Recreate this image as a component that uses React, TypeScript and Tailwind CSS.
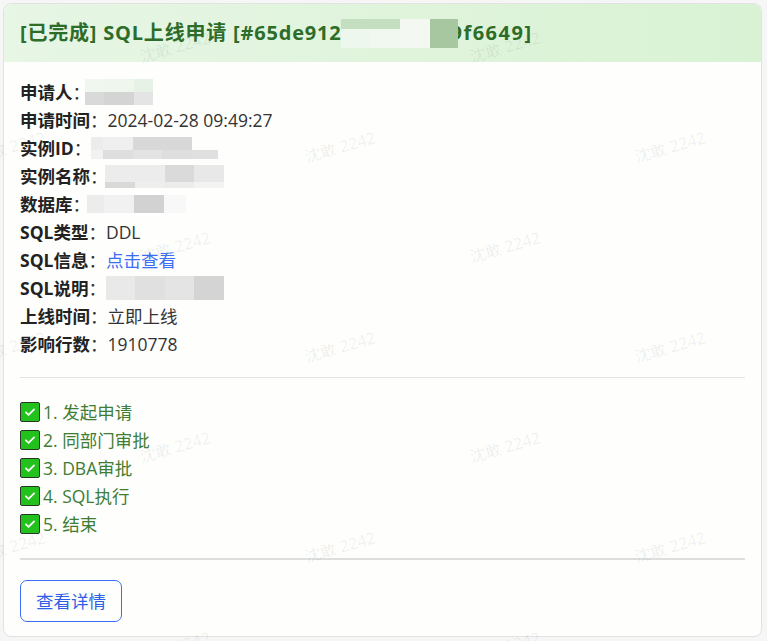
import React from 'react';

type Cell = { w: string; bg: string };

// pixelated blur blocks that hide private values
function Mosaic({ rows, className = '' }: { rows: { h: string; cells: Cell[] }[]; className?: string }) {
  return (
    <span className={`inline-flex flex-col align-middle ${className}`}>
      {rows.map((r, i) => (
        <span key={i} className={`flex ${r.h}`}>
          {r.cells.map((c, j) => (
            <span key={j} className={`${c.w} ${c.bg} h-full`} />
          ))}
        </span>
      ))}
    </span>
  );
}

const marks = [
  [175, 47], [505, 47],
  [10, 147], [340, 147], [670, 147],
  [175, 247], [505, 247],
  [10, 347], [340, 347], [670, 347],
  [175, 447], [505, 447],
  [10, 547], [340, 547], [670, 547],
  [175, 647], [505, 647],
];

function Watermarks() {
  return (
    <div className="pointer-events-none absolute inset-0 overflow-hidden">
      {marks.map(([x, y], i) => (
        <span
          key={i}
          className="absolute -translate-x-1/2 -translate-y-1/2 -rotate-[16deg] whitespace-nowrap text-[16px] text-black/[0.07]"
          style={{ left: x, top: y }}
        >
          沈敢 2242
        </span>
      ))}
    </div>
  );
}

function Row({ label, children }: { label: string; children: React.ReactNode }) {
  return (
    <div className="flex items-center h-[28px]">
      <b className="font-bold text-[#222]">{label}</b>
      <span className="text-[#333]">：</span>
      <span className="text-[#333] flex items-center">{children}</span>
    </div>
  );
}

function Check() {
  return (
    <span className="inline-flex items-center justify-center w-5 h-5 bg-[#22c11c] border border-[#2a3a28] rounded-[2px] mr-[3px]">
      <svg className="w-[14px] h-[14px]" viewBox="0 0 24 24" fill="none" stroke="#fff" strokeWidth={3} strokeLinecap="round" strokeLinejoin="round">
        <path d="M5 12.5l4.5 4.5L19 7.5" />
      </svg>
    </span>
  );
}

const steps = ['1. 发起申请', '2. 同部门审批', '3. DBA审批', '4. SQL执行', '5. 结束'];

export default function App() {
  return (
    <div className="relative w-[767px] h-[641px] bg-[#f6f6f6] p-[3px] pr-[5px] pb-[4px] font-['Open_Sans','Noto_Sans_CJK_SC',sans-serif] text-[17.5px]">
      <div className="h-full bg-[#fefefd] border border-[#e2e2e2] rounded-[8px] flex flex-col overflow-hidden">
        {/* header */}
        <div className="h-[58px] shrink-0 flex items-center px-4 bg-gradient-to-r from-[#e7f6e5] via-[#e0f4dc] to-[#d9f2d4]">
          <h1 className="text-[20px] tracking-[0.8px] font-bold text-[#2e6c2a] flex items-center whitespace-nowrap">
            [已完成] SQL上线申请 [#65de912
            <Mosaic
              className="relative z-10"
              rows={[
                { h: 'h-[10px]', cells: [{ w: 'w-[59px]', bg: 'bg-[#c4dfc0]' }, { w: 'w-[30px]', bg: 'bg-[#f3f9f2]' }, { w: 'w-[28px]', bg: 'bg-[#a7c7a1]' }] },
                { h: 'h-[19px]', cells: [{ w: 'w-[29px]', bg: 'bg-[#eef7ed]' }, { w: 'w-[30px]', bg: 'bg-[#f0f8ef]' }, { w: 'w-[30px]', bg: 'bg-[#f3f9f2]' }, { w: 'w-[28px]', bg: 'bg-[#a7c7a1]' }] },
              ]}
            />
            <span className="-ml-[8px] tracking-[1.5px]">9f6649]</span>
          </h1>
        </div>

        {/* body */}
        <div className="px-4 pt-4 flex flex-col">
          <Row label="申请人">
            <Mosaic
              className="-ml-[5px]"
              rows={[
                { h: 'h-[13px]', cells: [{ w: 'w-[19px]', bg: 'bg-[#f0f7ef]' }, { w: 'w-[30px]', bg: 'bg-[#eef6ed]' }, { w: 'w-[19px]', bg: 'bg-[#e6f2e5]' }] },
                { h: 'h-[13px]', cells: [{ w: 'w-[19px]', bg: 'bg-[#d9d9d9]' }, { w: 'w-[30px]', bg: 'bg-[#d4d4d4]' }, { w: 'w-[19px]', bg: 'bg-[#e4e4e4]' }] },
              ]}
            />
          </Row>
          <Row label="申请时间">2024-02-28 09:49:27</Row>
          <Row label="实例ID">
            <Mosaic
              rows={[
                { h: 'h-[13px]', cells: [{ w: 'w-[12px]', bg: 'bg-[#ececec]' }, { w: 'w-[30px]', bg: 'bg-[#efefef]' }, { w: 'w-[29px]', bg: 'bg-[#d8d8d8]' }, { w: 'w-[30px]', bg: 'bg-[#d8d8d8]' }, { w: 'w-[26px]', bg: 'bg-transparent' }] },
                { h: 'h-[9px]', cells: [{ w: 'w-[12px]', bg: 'bg-[#f2f2f2]' }, { w: 'w-[30px]', bg: 'bg-[#dedede]' }, { w: 'w-[29px]', bg: 'bg-[#e3e3e3]' }, { w: 'w-[30px]', bg: 'bg-[#dedede]' }, { w: 'w-[26px]', bg: 'bg-[#e0e0e0]' }] },
              ]}
            />
          </Row>
          <Row label="实例名称">
            <Mosaic
              className="-ml-[3px]"
              rows={[
                { h: 'h-[17px]', cells: [{ w: 'w-[30px]', bg: 'bg-[#ececec]' }, { w: 'w-[30px]', bg: 'bg-[#ececec]' }, { w: 'w-[29px]', bg: 'bg-[#dadada]' }, { w: 'w-[30px]', bg: 'bg-[#e8e8e8]' }] },
                { h: 'h-[6px]', cells: [{ w: 'w-[30px]', bg: 'bg-[#d9d9d9]' }, { w: 'w-[30px]', bg: 'bg-[#eeeeee]' }, { w: 'w-[29px]', bg: 'bg-[#ececec]' }, { w: 'w-[30px]', bg: 'bg-[#f3f3f3]' }] },
              ]}
            />
          </Row>
          <Row label="数据库">
            <Mosaic
              className="-ml-[3px]"
              rows={[
                { h: 'h-[18px]', cells: [{ w: 'w-[17px]', bg: 'bg-[#ececec]' }, { w: 'w-[30px]', bg: 'bg-[#f1f1f1]' }, { w: 'w-[30px]', bg: 'bg-[#d2d2d2]' }, { w: 'w-[22px]', bg: 'bg-[#f8f8f8]' }] },
              ]}
            />
          </Row>
          <Row label="SQL类型">DDL</Row>
          <Row label="SQL信息">
            <a className="text-[#3b6ef5]" href="#">点击查看</a>
          </Row>
          <Row label="SQL说明">
            <Mosaic
              rows={[
                { h: 'h-[24px]', cells: [{ w: 'w-[29px]', bg: 'bg-[#e9e9e9]' }, { w: 'w-[30px]', bg: 'bg-[#e0e0e0]' }, { w: 'w-[29px]', bg: 'bg-[#e4e4e4]' }, { w: 'w-[30px]', bg: 'bg-[#d4d4d4]' }] },
              ]}
            />
          </Row>
          <Row label="上线时间">立即上线</Row>
          <Row label="影响行数">1910778</Row>

          <hr className="mt-[19px] border-0 border-t border-[#e3e3e3]" />

          <div className="mt-[20px] flex flex-col text-[#3f7d35]">
            {steps.map((s) => (
              <div key={s} className="h-[28px] flex items-center">
                <Check />
                {s}
              </div>
            ))}
          </div>

          <hr className="mt-[20px] border-0 border-t-2 border-[#dedede]" />

          <div className="mt-[20px]">
            <button className="h-[42px] w-[102px] border border-[#3b6ef5] rounded-[7px] text-[#2f5fe6] text-[17.5px]">
              查看详情
            </button>
          </div>
        </div>
      </div>
      <Watermarks />
    </div>
  );
}
